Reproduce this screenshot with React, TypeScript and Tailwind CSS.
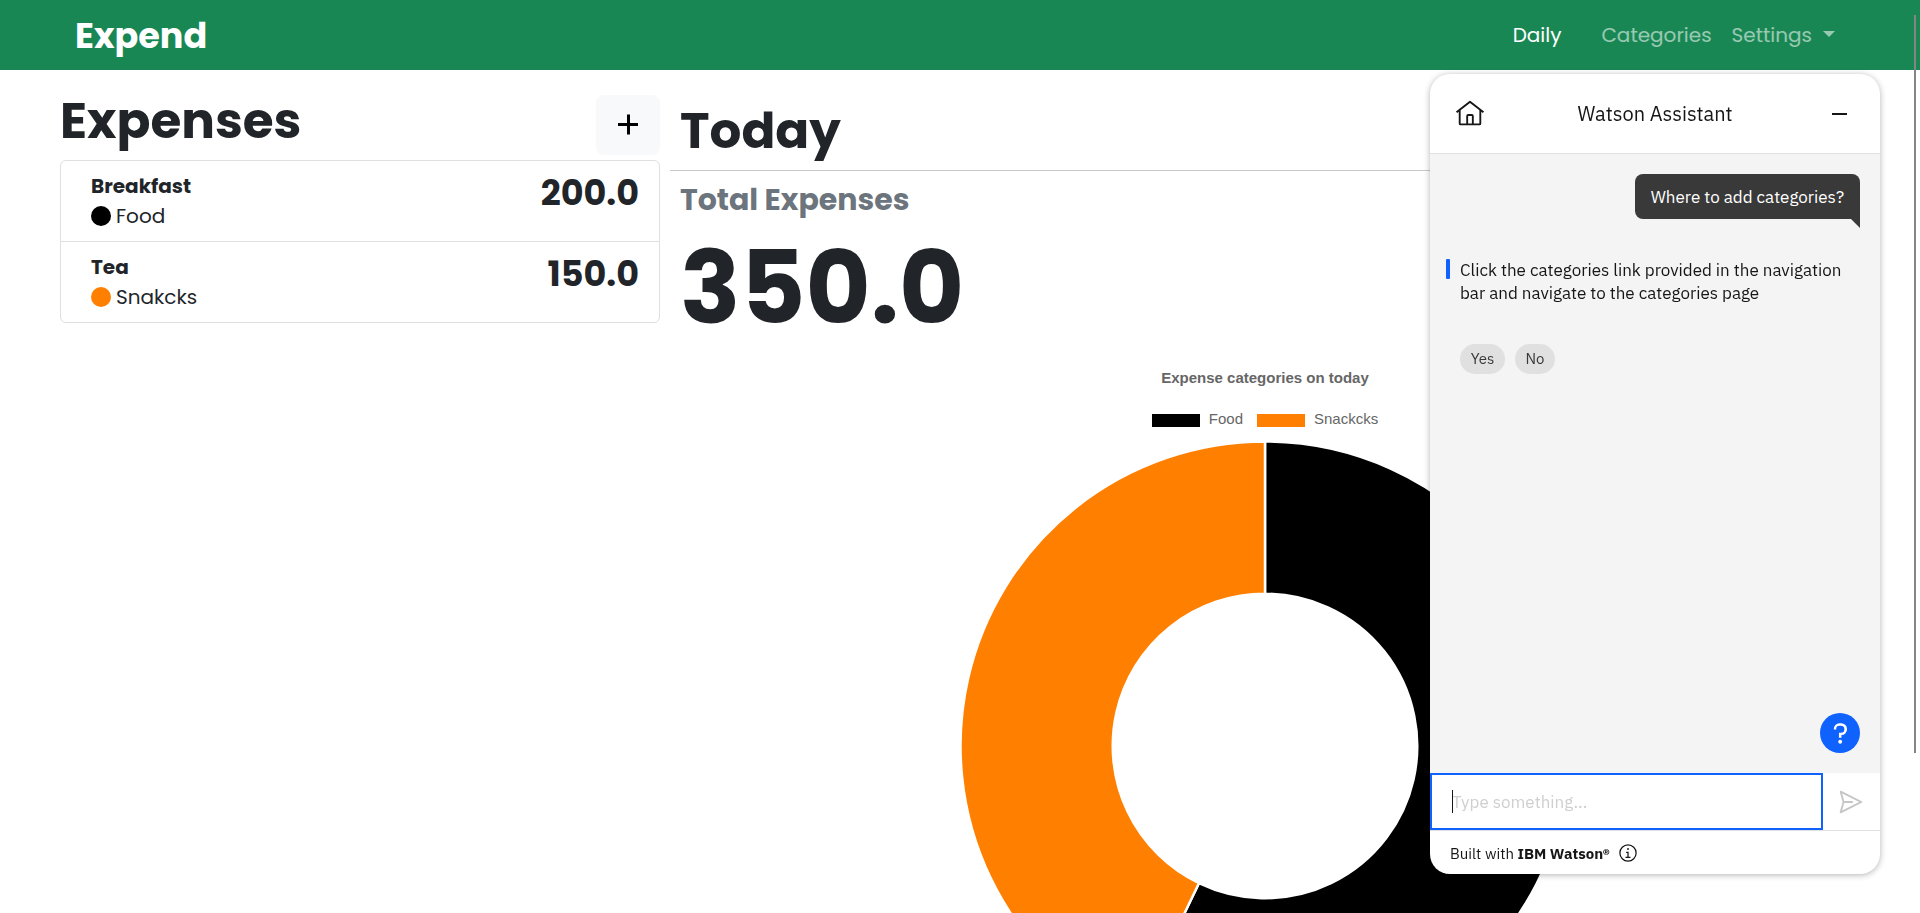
import type { ReactNode } from "react";

const expenses = [
  { name: "Breakfast", category: "Food", color: "#000000", amount: "200.0" },
  { name: "Tea", category: "Snakcks", color: "#ff8000", amount: "150.0" },
];

const legend = [
  { label: "Food", color: "#000000" },
  { label: "Snackcks", color: "#ff8000" },
];

function CarbonIcon({ className, children }: { className: string; children: ReactNode }) {
  return (
    <svg viewBox="0 0 32 32" fill="currentColor" aria-hidden="true" className={className}>
      {children}
    </svg>
  );
}

function Navbar() {
  return (
    <nav className="flex h-[70px] shrink-0 items-center justify-between bg-[#198754] pr-[85px] pl-[75px] text-white">
      <a href="#home" className="pt-[2px] text-[35px] leading-[52px] font-bold">
        Expend
      </a>
      <div className="flex items-center text-[20px] leading-[30px]">
        <a href="#daily" className="mr-10">
          Daily
        </a>
        <a href="#categories" className="mr-5 text-white/55">
          Categories
        </a>
        <a href="#settings" className="flex items-center gap-[11px] text-white/55">
          Settings
          <svg viewBox="0 0 12 6" className="mb-[2px] h-[6px] w-[12px]" fill="currentColor" aria-hidden="true">
            <path d="M0 0h12L6 6z" />
          </svg>
        </a>
      </div>
    </nav>
  );
}

function ExpenseList() {
  return (
    <section className="w-1/3 shrink-0 pt-[25px]">
      <div className="flex items-start justify-between">
        <h1 className="text-[50px] leading-[52px] font-bold">Expenses</h1>
        <button
          type="button"
          aria-label="Add expense"
          className="flex h-[60px] w-[64px] items-center justify-center rounded-lg bg-[#f8f9fa] text-black"
        >
          <svg viewBox="0 0 22 22" className="size-[22px]" fill="none" stroke="currentColor" strokeWidth="3">
            <path d="M11.5 0.5v20M1 10.5h20" />
          </svg>
        </button>
      </div>
      <ul className="mt-[5px] divide-y divide-[#dfdfdf] rounded-md border border-[#dfdfdf]">
        {expenses.map((item) => (
          <li key={item.name} className="flex items-start justify-between py-[10px] pr-5 pl-[30px]">
            <div className="text-[20px] leading-[30px]">
              <p className="font-bold">{item.name}</p>
              <p className="flex items-center gap-[5px]">
                <span className="size-5 rounded-full" style={{ backgroundColor: item.color }} />
                {item.category}
              </p>
            </div>
            <span className="text-[35px] leading-[44px] font-bold">{item.amount}</span>
          </li>
        ))}
      </ul>
    </section>
  );
}

function DoughnutChart() {
  const cx = 306;
  const outer = 304.5;
  const inner = 152.25;
  const angle = (200 / 350) * Math.PI * 2;
  const sx = Math.sin(angle);
  const sy = -Math.cos(angle);
  const point = (r: number) => `${cx + r * sx} ${cx + r * sy}`;
  return (
    <svg viewBox="0 0 612 612" className="mt-[12px] size-[612px]" stroke="#ffffff" strokeWidth="2.5" role="img" aria-label="Expense categories">
      <path
        fill="#000000"
        d={`M${cx} ${cx - outer}A${outer} ${outer} 0 1 1 ${point(outer)}L${point(inner)}A${inner} ${inner} 0 1 0 ${cx} ${cx - inner}Z`}
      />
      <path
        fill="#ff8000"
        d={`M${point(outer)}A${outer} ${outer} 0 0 1 ${cx} ${cx - outer}L${cx} ${cx - inner}A${inner} ${inner} 0 0 0 ${point(inner)}Z`}
      />
    </svg>
  );
}

function Summary() {
  return (
    <section className="min-w-0 grow pt-[30px]">
      <div className="border-b border-[#c8c9ca] px-[10px] pb-[8px]">
        <h1 className="text-[50px] leading-[62px] font-bold">Today</h1>
      </div>
      <div className="px-[10px] pt-[10px]">
        <h2 className="text-[30px] leading-[38px] font-bold text-[#6c757d]">Total Expenses</h2>
        <p className="mt-[8px] text-[100px] leading-[122px] font-bold">350.0</p>
      </div>
      <figure className="mt-[20px] flex flex-col items-center font-['Liberation_Sans',Arial,sans-serif] text-[15px] leading-[18px] text-[#666666]">
        <figcaption className="font-bold">Expense categories on today</figcaption>
        <div className="mt-[23px] flex gap-[14px]">
          {legend.map((item) => (
            <span key={item.label} className="flex items-center gap-[9px]">
              <span className="mt-[2px] h-[13px] w-[48px]" style={{ backgroundColor: item.color }} />
              {item.label}
            </span>
          ))}
        </div>
        <DoughnutChart />
      </figure>
    </section>
  );
}

function Assistant() {
  return (
    <aside
      aria-label="Watson Assistant"
      className="fixed top-[74px] right-10 flex h-[800px] w-[450px] flex-col overflow-hidden rounded-[20px] bg-white font-['IBM_Plex_Sans',Roboto,sans-serif] text-[#161616] shadow-[0_1px_6px_rgba(0,0,0,0.3)]"
    >
      <header className="flex h-20 shrink-0 items-center justify-between border-b border-[#e0e0e0] px-[25px]">
        <button type="button" aria-label="Home" className="flex size-[30px] items-center justify-center">
          <CarbonIcon className="size-[30px]">
            <path d="M16.6123,2.2138a1.01,1.01,0,0,0-1.2427,0L1,13.4194l1.2427,1.5717L4,13.6213V26a2.0041,2.0041,0,0,0,2,2H26a2.0037,2.0037,0,0,0,2-2V13.63L29.7573,15,31,13.4282ZM18,26H14V18h4Zm2,0V18a2.0023,2.0023,0,0,0-2-2H14a2.002,2.002,0,0,0-2,2v8H6V12.0615l10-7.79,10,7.8005V26Z" />
          </CarbonIcon>
        </button>
        <h2 className="text-[20px] leading-[28px]">Watson Assistant</h2>
        <button type="button" aria-label="Minimize" className="flex size-[30px] items-center justify-center">
          <span className="h-[2px] w-[15px] bg-[#161616]" />
        </button>
      </header>

      <div className="flex grow flex-col bg-[#f4f4f4] p-5 text-[17px] leading-[23px]">
        <div className="relative self-end rounded-t-lg rounded-bl-lg bg-[#393939] px-4 pt-[12px] pb-[10px] text-white">
          Where to add categories?
          <svg viewBox="0 0 9 9" className="absolute top-full right-0 size-[9px]" fill="#393939" aria-hidden="true">
            <path d="M0 0h9v9z" />
          </svg>
        </div>
        <div className="mt-[40px] -ml-1 flex gap-[10px]">
          <span className="h-5 w-1 shrink-0 rounded-[1px] bg-[#0f62fe]" />
          <p>
            Click the categories link provided in the navigation
            <br />
            bar and navigate to the categories page
          </p>
        </div>
        <div className="mt-[39px] ml-[10px] flex gap-[10px] text-[15px] leading-[30px] text-[#393939]">
          <button type="button" className="w-[45px] rounded-full bg-[#e0e0e0]">
            Yes
          </button>
          <button type="button" className="w-[40px] rounded-full bg-[#e0e0e0]">
            No
          </button>
        </div>
        <button
          type="button"
          aria-label="Help"
          className="mt-auto flex size-10 items-center justify-center self-end rounded-full bg-[#0f62fe] text-white"
        >
          <CarbonIcon className="size-[25px]">
            <circle cx="15.6" cy="26.6" r="2.5" />
            <path d="M16.5 3h-2a7 7 0 0 0-7 7v1h3v-1a4 4 0 0 1 4-4h2a4.5 4.5 0 0 1 0 9H14v6.5h3.2V18A7.5 7.5 0 0 0 16.5 3Z" />
          </CarbonIcon>
        </button>
      </div>

      <form className="flex h-[57px] shrink-0">
        <div className="relative flex min-w-0 grow items-center">
          <input
            type="text"
            aria-label="Type something"
            placeholder="Type something..."
            className="h-full w-full border-2 border-[#0f62fe] px-5 text-[17px] leading-[23px] outline-none placeholder:text-[#cfcfcf]"
          />
          <span className="absolute left-[22px] h-[23px] w-px bg-[#161616]" />
        </div>
        <button type="button" aria-label="Send" className="flex w-[57px] items-center justify-center pr-[2px] text-[#c6c6c6]">
          <CarbonIcon className="size-[30px]">
            <path d="M27.45,15.11l-22-11a1,1,0,0,0-1.08.12,1,1,0,0,0-.33,1L7,16,4,26.74A1,1,0,0,0,5,28a1,1,0,0,0,.45-.11l22-11a1,1,0,0,0,0-1.78Zm-20.9,10L8.76,17H18V15H8.76L6.55,6.89,24.76,16Z" />
          </CarbonIcon>
        </button>
      </form>

      <footer className="flex h-[44px] shrink-0 items-center gap-[8px] border-t border-[#e0e0e0] px-5 text-[15px] leading-5">
        <span className="pt-[2px]">
          Built with <b className="font-bold">IBM Watson®</b>
        </span>
        <button type="button" aria-label="About">
          <CarbonIcon className="size-5">
            <path d="M17 22V14H13v2h2v6H12v2h8V22ZM16 8a1.5 1.5 0 1 0 1.5 1.5A1.5 1.5 0 0 0 16 8Z" />
            <path d="M16,30A14,14,0,1,1,30,16,14,14,0,0,1,16,30ZM16,4A12,12,0,1,0,28,16,12,12,0,0,0,16,4Z" />
          </CarbonIcon>
        </button>
      </footer>
    </aside>
  );
}

export default function App() {
  return (
    <div className="flex h-screen flex-col overflow-y-auto bg-white font-[Poppins,Inter,sans-serif] text-[#212529] [scrollbar-width:none]">
      <Navbar />
      <main className="flex gap-[10px] px-[60px]">
        <ExpenseList />
        <Summary />
      </main>
      <Assistant />
      <div className="fixed top-[15px] right-1 h-[738px] w-[2px] bg-[#858585]" />
    </div>
  );
}
